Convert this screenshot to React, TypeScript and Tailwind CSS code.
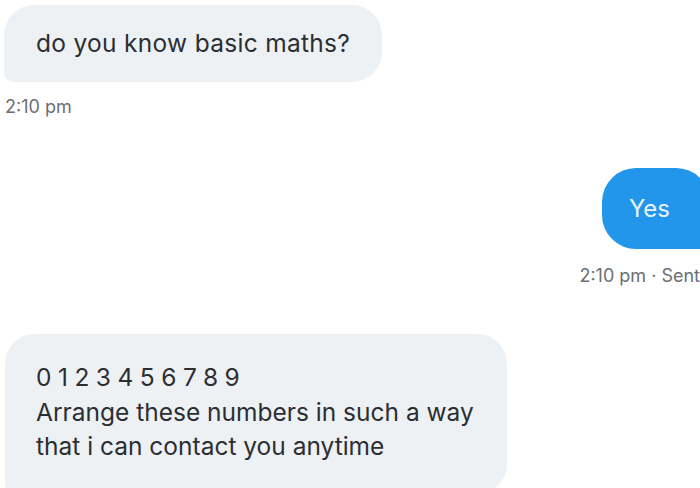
export default function App() {
  return (
    <div
      className="relative h-[488px] w-[700px] overflow-hidden bg-white text-[#2b2f33]"
      style={{ fontFamily: 'Inter, "Liberation Sans", sans-serif' }}
    >
      <div className="flex flex-col pt-[5px]">
        {/* received */}
        <div className="ml-[4px] flex h-[77px] w-fit items-center rounded-[30px] rounded-bl-[10px] bg-[#eef1f3] px-[32px] text-[24.5px] tracking-[0.3px]">
          do you know basic maths?
        </div>
        <div className="ml-[5px] mt-[11px] text-[18px] text-[#6b6f74]">2:10 pm</div>

        {/* sent */}
        <div className="mt-[48px] flex justify-end">
          <div className="-mr-[10px] flex h-[81px] items-center rounded-[34px] rounded-br-[10px] bg-[#2196ea] pl-[27px] pr-[40px] text-[24px] text-[#e8f3fc]">
            Yes
          </div>
        </div>
        <div className="mt-[13px] text-right text-[18px] text-[#6b6f74]">2:10 pm · Sent</div>

        {/* received */}
        <div className="ml-[5px] mt-[45px] w-[502px] whitespace-nowrap rounded-[30px] rounded-bl-[10px] bg-[#eef1f3] px-[31px] pb-[30px] pt-[26px] text-[24.5px] leading-[34.5px]">
          <div className="tracking-[6.5px]">0123456789</div>
          <div>Arrange these numbers in such a way</div>
          <div>that i can contact you anytime</div>
        </div>
      </div>
    </div>
  );
}
